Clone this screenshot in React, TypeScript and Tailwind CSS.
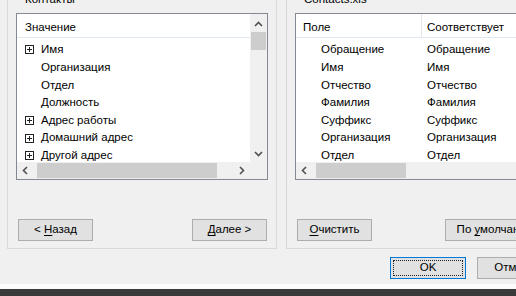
import React from 'react';

const PlusBox = () => (
  <svg width="9" height="9" viewBox="0 0 9 9" shapeRendering="crispEdges" className="shrink-0">
    <rect x="0.5" y="0.5" width="8" height="8" fill="#fff" stroke="#222" />
    <rect x="2" y="4" width="5" height="1" fill="#222" />
    <rect x="4" y="2" width="1" height="5" fill="#222" />
  </svg>
);

const Arrow = ({ dir }: { dir: 'up' | 'down' | 'left' | 'right' }) => {
  const pts = {
    up: '1,5 4.5,1.5 8,5',
    down: '1,2 4.5,5.5 8,2',
    left: '5,1 1.5,4.5 5,8',
    right: '2,1 5.5,4.5 2,8',
  }[dir];
  const vertical = dir === 'up' || dir === 'down';
  return (
    <svg
      width={vertical ? 9 : 7}
      height={vertical ? 7 : 9}
      viewBox={vertical ? '0 0 9 7' : '0 0 7 9'}
    >
      <polyline points={pts} fill="none" stroke="#505050" strokeWidth="1.6" />
    </svg>
  );
};

const Mn = ({ children }: { children: React.ReactNode }) => (
  <span className="underline underline-offset-[2px] decoration-1">{children}</span>
);

const Btn = ({ w, children }: { w: string; children: React.ReactNode }) => (
  <button
    className={`${w} h-[22px] shrink-0 border border-[#adadad] bg-[#e1e1e1] text-black flex items-center justify-center`}
  >
    <span className="whitespace-pre">{children}</span>
  </button>
);

// полосы прокрутки списка
const HScroll = ({ thumbW, withCorner }: { thumbW: string; withCorner: boolean }) => (
  <div className="h-[17px] flex bg-[#f0f0f0] shrink-0">
    <div className="w-[17px] flex items-center justify-center">
      <Arrow dir="left" />
    </div>
    <div className="flex-1 flex items-center">
      <div className={`${thumbW} h-[15px] ml-[3px] bg-[#cdcdcd]`} />
    </div>
    <div className="w-[17px] flex items-center justify-center">
      <Arrow dir="right" />
    </div>
    {withCorner && <div className="w-[17px]" />}
  </div>
);

const VScroll = () => (
  <div className="w-[17px] bg-[#f0f0f0] flex flex-col shrink-0">
    <div className="h-[17px] pt-[3px] flex items-center justify-center">
      <Arrow dir="up" />
    </div>
    <div className="mx-[1px] mt-[1px] h-[18px] bg-[#cdcdcd]" />
    <div className="flex-1" />
    <div className="h-[17px] flex items-center justify-center">
      <Arrow dir="down" />
    </div>
  </div>
);

const leftItems: { label: string; group: boolean }[] = [
  { label: 'Имя', group: true },
  { label: 'Организация', group: false },
  { label: 'Отдел', group: false },
  { label: 'Должность', group: false },
  { label: 'Адрес работы', group: true },
  { label: 'Домашний адрес', group: true },
  { label: 'Другой адрес', group: true },
];

const rightItems: [string, string][] = [
  ['Обращение', 'Обращение'],
  ['Имя', 'Имя'],
  ['Отчество', 'Отчество'],
  ['Фамилия', 'Фамилия'],
  ['Суффикс', 'Суффикс'],
  ['Организация', 'Организация'],
  ['Отдел', 'Отдел'],
];

export default function App() {
  return (
    <div className="w-[516px] h-[296px] overflow-hidden bg-[#f0f0f0] flex flex-col font-['Liberation_Sans',Arial,sans-serif] text-[11.5px] text-black">
      <div className="w-[563px] shrink-0 flex flex-col">
        {/* группы */}
        <div className="flex gap-[9px] pl-[7px] -mt-[8px]">
          <fieldset className="w-[270px] shrink-0 border border-[#d9d9d9] px-[8px] pt-[7px] pb-[7px]">
            <legend className="ml-[7px] px-[2px] leading-[14px]">Контакты</legend>
            <div className="w-[252px] h-[167px] border border-[#838a93] bg-white flex flex-col">
              <div className="flex flex-1 min-h-0">
                <div className="flex-1 min-w-0 overflow-hidden">
                  <div className="h-[24px] flex items-center pt-[4px] pl-[8px] border-b border-[#dfe8f1]">
                    Значение
                  </div>
                  <div className="pt-[3px]">
                    {leftItems.map((it) => (
                      <div
                        key={it.label}
                        className={`h-[17.67px] flex items-center whitespace-nowrap ${it.group ? 'pl-[8px] gap-[7px]' : 'pl-[24px]'}`}
                      >
                        {it.group && <PlusBox />}
                        <span>{it.label}</span>
                      </div>
                    ))}
                  </div>
                </div>
                <VScroll />
              </div>
              <HScroll thumbW="w-[180px]" withCorner />
            </div>
            <div className="flex justify-between pl-[2px] pr-[1px] mt-[39px]">
              <Btn w="w-[75px]">
                &lt; <Mn>Н</Mn>азад
              </Btn>
              <Btn w="w-[75px]">
                <Mn>Д</Mn>алее &gt;
              </Btn>
            </div>
          </fieldset>

          <fieldset className="w-[270px] shrink-0 border border-[#d9d9d9] px-[8px] pt-[7px] pb-[7px]">
            <legend className="ml-[7px] px-[2px] leading-[14px]">Contacts.xls</legend>
            <div className="w-[252px] h-[167px] border border-[#838a93] bg-white flex flex-col">
              <div className="flex-1 min-h-0 overflow-hidden">
                <div className="h-[24px] flex border-b border-[#dfe8f1]">
                  <div className="w-[126px] shrink-0 flex items-center pt-[4px] pl-[7px] border-r border-[#e5e5e5]">
                    Поле
                  </div>
                  <div className="flex items-center pt-[4px] pl-[5px] whitespace-nowrap">Соответствует</div>
                </div>
                <div className="pt-[3px]">
                  {rightItems.map(([a, b], i) => (
                    <div key={i} className="h-[17.67px] flex items-center whitespace-nowrap">
                      <div className="w-[126px] shrink-0 pl-[25px]">{a}</div>
                      <div className="pl-[5px]">{b}</div>
                    </div>
                  ))}
                </div>
              </div>
              <HScroll thumbW="w-[90px]" withCorner={false} />
            </div>
            <div className="flex justify-between pl-[2px] pr-[1px] mt-[39px]">
              <Btn w="w-[75px]">
                <Mn>О</Mn>чистить
              </Btn>
              <Btn w="w-[101px]">
                По <Mn>у</Mn>молчанию
              </Btn>
            </div>
          </fieldset>
        </div>

        {/* кнопки диалога */}
        <div className="flex justify-end gap-[11px] pr-[10px] mt-[8px]">
          <button className="w-[76px] h-[22px] border border-[#0078d7] bg-[#e1e1e1] p-[2px] flex">
            <span className="flex-1 border border-dotted border-[#222] flex items-center justify-center">
              OK
            </span>
          </button>
          <Btn w="w-[76px]">Отмена</Btn>
        </div>
      </div>
      <div className="flex-1" />
      <div className="h-[5px] bg-[#fbfbfb] shrink-0" />
      <div className="h-[7px] bg-[#3a3a3a] shrink-0" />
    </div>
  );
}
